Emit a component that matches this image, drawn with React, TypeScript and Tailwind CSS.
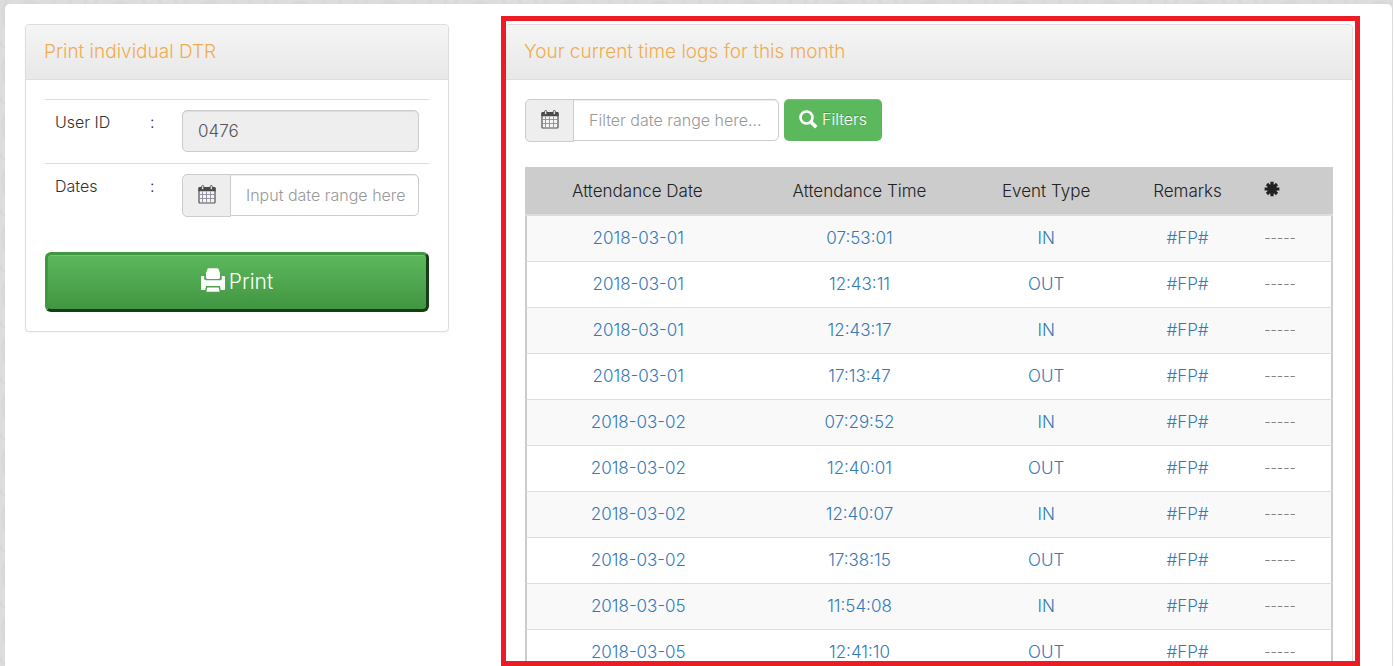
import type { ReactNode } from 'react';

type Log = { date: string; time: string; event: 'IN' | 'OUT' };

const logs: Log[] = [
  { date: '2018-03-01', time: '07:53:01', event: 'IN' },
  { date: '2018-03-01', time: '12:43:11', event: 'OUT' },
  { date: '2018-03-01', time: '12:43:17', event: 'IN' },
  { date: '2018-03-01', time: '17:13:47', event: 'OUT' },
  { date: '2018-03-02', time: '07:29:52', event: 'IN' },
  { date: '2018-03-02', time: '12:40:01', event: 'OUT' },
  { date: '2018-03-02', time: '12:40:07', event: 'IN' },
  { date: '2018-03-02', time: '17:38:15', event: 'OUT' },
  { date: '2018-03-05', time: '11:54:08', event: 'IN' },
  { date: '2018-03-05', time: '12:41:10', event: 'OUT' },
];

function CalendarIcon() {
  return (
    <svg viewBox="0 0 18 19" className="h-[19px] w-[18px]" aria-hidden="true">
      <rect x="1" y="3" width="16" height="15" rx="0.8" fill="#f4f4f4" stroke="#505050" strokeWidth="1.2" />
      <path fill="#4a4a4a" d="M1.4 2h15.200a1 1 0 0 1 1 1v3.200H.4V3a1 1 0 0 1 1-1Z" />
      <rect x="3.600" y="0.500" width="2.200" height="4.200" rx="1.100" fill="#eee" stroke="#4a4a4a" strokeWidth="0.900" />
      <rect x="12.200" y="0.500" width="2.200" height="4.200" rx="1.100" fill="#eee" stroke="#4a4a4a" strokeWidth="0.900" />
      <path stroke="#8c8c9c" strokeWidth="0.900" d="M4.500 6.500v11M8.500 6.500v11M12.500 6.500v11M1.500 9.500h15M1.500 13.500h15" />
    </svg>
  );
}

function SearchIcon() {
  return (
    <svg viewBox="0 0 19 19" className="h-[19px] w-[19px]" fill="none" stroke="#fff" aria-hidden="true">
      <circle cx="7.500" cy="7.500" r="6" strokeWidth="2.600" />
      <path d="m12.200 12.200 5 5" strokeWidth="3.600" />
    </svg>
  );
}

function PrinterIcon() {
  return (
    <svg viewBox="0 0 24 24" className="h-6 w-6" fill="#fff" aria-hidden="true">
      <path d="M7.800.2h8.400q.9 0 1.300.700L19 5v4q0 2-1.500 2H6.500Q5 11 5 9V5L6.500.9Q6.900.2 7.800.2Z" />
      <path d="M.8 8h2.400v2.700q0 1.600 1.600 1.600h14.400q1.600 0 1.600-1.600V8h2.400q.8 0 .8.800v12.400q0 .8-.8.800h-3.400l-.9-4H5.100l-.9 4H.8q-.8 0-.8-.8V8.800Q0 8 .8 8Z" />
      <path d="M6.300 19.500h11.400l.9 3.500q.1.800-.7.800H6.100q-.8 0-.7-.8Z" />
    </svg>
  );
}

function AsteriskIcon() {
  return (
    <svg viewBox="0 0 16 16" className="h-4 w-4" stroke="#222" aria-hidden="true">
      <path strokeWidth="3.200" d="M8 .8v14.400M.6 8h14.800M3 3l10 10M13 3 3 13" />
      <circle cx="8" cy="8" r="4.300" fill="#222" />
    </svg>
  );
}

function Panel({ title, children }: { title: string; children: ReactNode }) {
  return (
    <section className="rounded-[4px] border border-[#ddd] bg-white shadow-xs">
      <h2 className="rounded-t-[3px] border-b border-[#ddd] bg-linear-to-b from-[#f5f5f5] to-[#e8e8e8] px-[18px] py-3 text-[19px] leading-[30px] text-[#f0ad4e]">
        {title}
      </h2>
      <div className="p-[19px]">{children}</div>
    </section>
  );
}

function DateInput({ id, label, placeholder }: { id: string; label: string; placeholder: string }) {
  return (
    <div className="flex min-w-0">
      <label
        htmlFor={id}
        aria-label={label}
        className="flex h-[43px] w-[49px] shrink-0 items-start justify-center rounded-l-[5px] border border-[#ccc] bg-[#eee] pt-[10px]"
      >
        <CalendarIcon />
      </label>
      <input
        id={id}
        type="text"
        placeholder={placeholder}
        className="-ml-px h-[42px] w-full min-w-0 rounded-r-[5px] border border-[#ccc] bg-white pl-[15px] text-[16px] text-[#555] shadow-[inset_0_1px_1px_rgba(0,0,0,0.075)] outline-none placeholder:text-[#999]"
      />
    </div>
  );
}

export default function App() {
  return (
    <div className="flex h-screen overflow-hidden bg-white pr-[2px] font-['Inter','Liberation_Sans',sans-serif] font-light text-[#333]">
      <div className="flex min-w-0 flex-1 bg-[#dadada] bg-[repeating-radial-gradient(circle_at_30px_14px,#dddddd_0_9px,#d7d7d7_12px,#dddddd_15px)] bg-[length:90px_56px] pt-1 pr-px pl-[5px]">
        <main className="grid min-w-0 flex-1 grid-cols-[1fr_2fr] grid-rows-[100%] gap-14 rounded-t-[5px] bg-white pt-5 pr-[39px] pl-5">
          <div className="min-w-0">
            <Panel title="Print individual DTR">
              <form onSubmit={(e) => e.preventDefault()}>
                <div className="grid grid-cols-[97px_30px_1fr] border-t border-[#ddd] text-[16px] leading-6">
                  <label htmlFor="user-id" className="px-[10px] pt-[10px]">User ID</label>
                  <span className="px-2 pt-[10px]">:</span>
                  <div className="px-[10px] pt-[10px] pb-[11px]">
                    <input
                      id="user-id"
                      type="text"
                      readOnly
                      value="0476"
                      className="h-[42px] w-full rounded-[5px] border border-[#ccc] bg-[#eee] px-[15px] text-[17px] text-[#555] shadow-[inset_0_1px_1px_rgba(0,0,0,0.075)] outline-none"
                    />
                  </div>
                </div>
                <div className="grid grid-cols-[97px_30px_1fr] border-t border-[#ddd] text-[16px] leading-6">
                  <label htmlFor="dates" className="px-[10px] pt-[10px]">Dates</label>
                  <span className="px-2 pt-[10px]">:</span>
                  <div className="px-[10px] py-[10px]">
                    <DateInput id="dates" label="Pick dates" placeholder="Input date range here" />
                  </div>
                </div>
                <button
                  type="submit"
                  className="mt-[25px] flex h-[60px] w-full items-center justify-center gap-1 rounded-[6px] border-3 border-t-[#419641] border-r-[#173d17] border-b-[#173d17] border-l-[#419641] bg-linear-to-b from-[#5cb85c] to-[#419641] pb-1 text-[21px] text-white shadow-[inset_0_1px_0_rgba(255,255,255,0.15)]"
                >
                  <PrinterIcon />
                  <span className="pt-1">Print</span>
                </button>
              </form>
            </Panel>
          </div>

          <div className="relative min-w-0">
            <Panel title="Your current time logs for this month">
              <form className="flex gap-[5px]" onSubmit={(e) => e.preventDefault()}>
                <div className="w-[254px]">
                  <DateInput id="filter" label="Pick filter dates" placeholder="Filter date range here..." />
                </div>
                <button
                  type="submit"
                  className="flex h-[42px] items-center gap-1 rounded-[5px] bg-[#5cb85c] px-[15px] pb-[2px] text-[16px] text-white shadow-[inset_0_1px_0_rgba(255,255,255,0.15)] text-shadow-[0_-1px_0_rgba(0,0,0,0.2)]"
                >
                  <SearchIcon />
                  Filters
                </button>
              </form>
              <table className="mt-[25px] w-full table-fixed border-separate border-spacing-0 text-center text-[17px] leading-6">
                <colgroup>
                  <col className="w-[27.8%]" />
                  <col className="w-[27.2%]" />
                  <col className="w-[19%]" />
                  <col className="w-[16%]" />
                  <col className="w-[10%]" />
                </colgroup>
                <thead className="bg-[#ccc] text-[#222]">
                  <tr className="*:h-[49px] *:border-b-2 *:border-[#ddd] *:font-light">
                    <th scope="col">Attendance Date</th>
                    <th scope="col">Attendance Time</th>
                    <th scope="col">Event Type</th>
                    <th scope="col">Remarks</th>
                    <th scope="col" aria-label="Actions" className="px-3 pb-1"><AsteriskIcon /></th>
                  </tr>
                </thead>
                <tbody className="text-[#337ab7]">
                  {logs.map((log) => (
                    <tr key={log.time} className="odd:bg-[#f9f9f9] *:h-[46px] *:border-b *:border-b-[#ddd] *:pb-[2px]">
                      <td className="border-l-2 border-l-[#ccc]">{log.date}</td>
                      <td>{log.time}</td>
                      <td>{log.event}</td>
                      <td>#FP#</td>
                      <td className="border-r-2 border-r-[#ccc] px-3 text-left text-[14px] text-[#777]">-----</td>
                    </tr>
                  ))}
                </tbody>
              </table>
            </Panel>
            <div className="pointer-events-none absolute -top-2 -right-[7px] bottom-0 -left-1 border-5 border-[#ed1c24]" />
          </div>
        </main>
      </div>
    </div>
  );
}
